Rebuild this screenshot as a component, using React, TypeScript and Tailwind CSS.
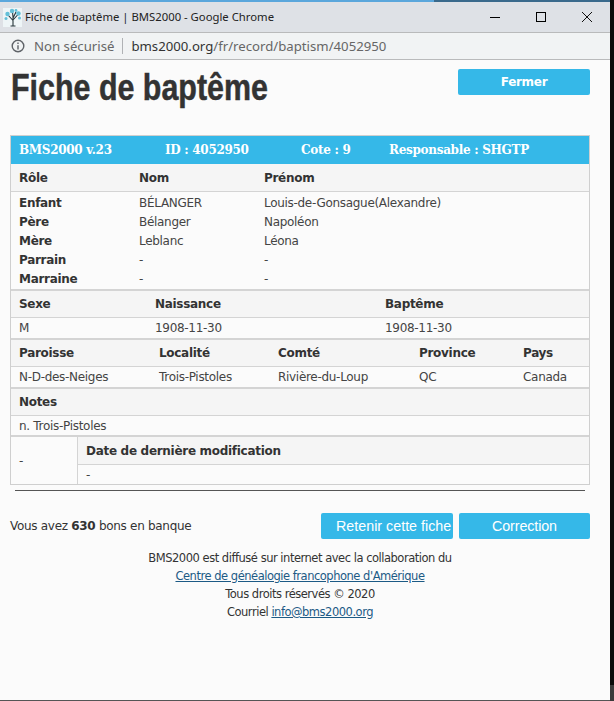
import React from "react";

const cell = "px-[8px]";

function Tree() {
  return (
    <svg width="19" height="19" viewBox="0 0 19 19" className="shrink-0">
      <rect x="0" y="0" width="19" height="19" fill="#eef5f7" />
      <path d="M10 18V9M10 12.5L5 7M10 12L15 6.5M10 9L9.5 4M10 10L13 4" stroke="#26343a" strokeWidth="1.1" fill="none" />
      <path d="M7.5 18h5" stroke="#26343a" strokeWidth="1" />
      <g fill="#63bfd8">
        <circle cx="4.5" cy="6" r="2.2" />
        <circle cx="15.5" cy="5.5" r="2.2" />
        <circle cx="9" cy="3" r="2.2" />
        <circle cx="3" cy="10.5" r="1.5" />
        <circle cx="16.5" cy="10" r="1.5" />
        <circle cx="13" cy="2.5" r="1.4" />
      </g>
    </svg>
  );
}

function Row({ role, nom, prenom }: { role: string; nom: string; prenom: string }) {
  return (
    <div className="flex h-[19px] items-center">
      <div className="w-[128px] pl-[8px] font-bold">{role}</div>
      <div className="w-[125px] text-[#444]">{nom}</div>
      <div className="text-[#444]">{prenom}</div>
    </div>
  );
}

function Cols({ items, head, widths }: { items: string[]; head?: boolean; widths: string[] }) {
  return (
    <div className={head ? "flex h-[26px] items-center bg-[#f5f5f5] font-bold" : "flex h-[20px] items-center text-[#444]"}>
      {items.map((t, i) => (
        <div key={t} className={widths[i]}>
          {t}
        </div>
      ))}
    </div>
  );
}

export default function App() {
  const w1 = ["w-[144px] pl-[8px]", "w-[230px]", "flex-1"];
  const w2 = ["w-[148px] pl-[8px]", "w-[119px]", "w-[141px]", "w-[104px]", "flex-1"];
  return (
    <div className="flex h-[701px] w-[614px] overflow-hidden bg-[#fbfbfb] text-[12px] leading-[18px] tracking-[-0.3px] text-[#333] [font-family:'DejaVu_Sans',sans-serif]">
      <div className="flex min-w-0 flex-1 flex-col">
        <div className="flex h-[2px]">
          <div className="w-[434px] bg-[#5ba7dc]" />
          <div className="flex-1 bg-[#3a6a8c]" />
        </div>
        <div className="flex h-[30px] items-center bg-[#dee1e6] pl-[3px] tracking-normal [font-family:'Noto_Sans',sans-serif]">
          <Tree />
          <span className="ml-[3px] text-[11.3px] text-[#222]">Fiche de baptême | BMS2000 - Google Chrome</span>
          <div className="ml-auto flex items-center pr-[18px]">
            <div className="mt-[1px] h-px w-[10px] bg-black" />
            <div className="ml-[36px] h-[10px] w-[10px] border border-black" />
            <svg width="10" height="10" viewBox="0 0 10 10" className="ml-[36px]">
              <path d="M0 0l10 10M10 0L0 10" stroke="#111" strokeWidth="1" fill="none" />
            </svg>
          </div>
        </div>
        <div className="flex h-[28px] items-center border-y border-[#b9babb] bg-[#f1f3f4] pl-[11px] text-[13.2px] tracking-normal text-[#666] [font-family:'Noto_Sans',sans-serif]">
          <svg width="14" height="14" viewBox="0 0 14 14" fill="none" stroke="#5f6368" strokeWidth="1.4">
            <circle cx="7" cy="7" r="5.8" />
            <path d="M7 6.2V10.4M7 3.5V5" />
          </svg>
          <span className="ml-[9px]">Non sécurisé</span>
          <div className="mr-[8px] ml-[8px] h-[16px] w-px bg-[#b0b2b5]" />
          <span className="text-[#333]">bms2000.org</span>
          <span>/fr/record/baptism/4052950</span>
        </div>
        <div className="flex flex-1 flex-col">
          <div className="flex h-[75px] items-start justify-between pr-[20px] pl-[11px]">
            <h1 className="mt-[6px] origin-left scale-x-[0.822] text-[37px] leading-[44px] font-bold tracking-normal whitespace-nowrap text-[#333] [-webkit-text-stroke:0.5px_#333] [font-family:'Liberation_Sans',sans-serif]">
              Fiche de baptême
            </h1>
            <button className="mt-[9px] h-[26px] w-[132px] rounded-[2px] bg-[#35b8e8] text-[12px] font-bold text-white">
              Fermer
            </button>
          </div>
          <div className="mr-[20px] ml-[10px] border border-[#cfcfcf]">
            <div className="flex h-[28px] items-center bg-[#35b8e8] pl-[8px] font-bold text-white [font-family:'DejaVu_Serif',serif]">
              <span className="w-[146px]">BMS2000 v.23</span>
              <span className="w-[136px]">ID : 4052950</span>
              <span className="w-[88px]">Cote : 9</span>
              <span>Responsable : SHGTP</span>
            </div>
            <div className="flex h-[28px] items-center border-b border-[#d4d4d4] bg-[#f5f5f5] pt-[1px] font-bold">
              <div className="w-[128px] pl-[8px]">Rôle</div>
              <div className="w-[125px]">Nom</div>
              <div>Prénom</div>
            </div>
            <div className="py-[1px]">
              <Row role="Enfant" nom="BÉLANGER" prenom="Louis-de-Gonsague(Alexandre)" />
              <Row role="Père" nom="Bélanger" prenom="Napoléon" />
              <Row role="Mère" nom="Leblanc" prenom="Léona" />
              <Row role="Parrain" nom="-" prenom="-" />
              <Row role="Marraine" nom="-" prenom="-" />
            </div>
            <div className="border-t-2 border-[#d4d4d4]">
              <div className="border-b border-[#d4d4d4]">
                <Cols head items={["Sexe", "Naissance", "Baptême"]} widths={w1} />
              </div>
              <Cols items={["M", "1908-11-30", "1908-11-30"]} widths={w1} />
            </div>
            <div className="border-t-2 border-[#d4d4d4]">
              <div className="border-b border-[#d4d4d4]">
                <Cols head items={["Paroisse", "Localité", "Comté", "Province", "Pays"]} widths={w2} />
              </div>
              <Cols items={["N-D-des-Neiges", "Trois-Pistoles", "Rivière-du-Loup", "QC", "Canada"]} widths={w2} />
            </div>
            <div className="border-t-2 border-[#d4d4d4]">
              <div className={`flex h-[26px] items-center border-b border-[#d4d4d4] bg-[#f5f5f5] box-content font-bold ${cell}`}>Notes</div>
              <div className={`flex h-[19px] items-center text-[#444] ${cell}`}>n. Trois-Pistoles</div>
            </div>
            <div className="flex border-t-2 border-[#d4d4d4]">
              <div className="flex w-[67px] items-center border-r border-[#d4d4d4] pl-[8px] text-[#444]">-</div>
              <div className="flex-1">
                <div className="box-content flex h-[27px] items-center border-b border-[#d4d4d4] bg-[#f5f5f5] pl-[8px] font-bold">
                  Date de dernière modification
                </div>
                <div className="flex h-[19px] items-center pl-[8px] text-[#444]">-</div>
              </div>
            </div>
          </div>
          <div className="mt-[5px] mr-[25px] ml-[15px] h-px bg-[#555]" />
          <div className="mt-[22px] mr-[20px] ml-[10px] flex items-start justify-between">
            <div className="mt-[4px]">
              Vous avez <b>630</b> bons en banque
            </div>
            <div className="flex gap-[6px]">
              <button className="h-[26px] w-[132px] rounded-[2px] bg-[#35b8e8] pl-[15px] text-left text-[14.3px] tracking-normal text-white [font-family:'Liberation_Sans',sans-serif]">
                Retenir cette fiche
              </button>
              <button className="h-[26px] w-[131px] rounded-[2px] bg-[#35b8e8] text-[14.3px] tracking-[-0.1px] text-white [font-family:'Liberation_Sans',sans-serif]">
                Correction
              </button>
            </div>
          </div>
          <div className="mt-[10px] pr-[10px] text-center text-[11.5px] leading-[18px] tracking-[-0.48px]">
            <div>BMS2000 est diffusé sur internet avec la collaboration du</div>
            <div>
              <a className="text-[#1c5a85] underline">Centre de généalogie francophone d'Amérique</a>
            </div>
            <div>Tous droits réservés © 2020</div>
            <div>
              Courriel <a className="text-[#1c5a85] underline">info@bms2000.org</a>
            </div>
          </div>
        </div>
        <div className="h-[1px] bg-[#555]" />
      </div>
      <div className="flex w-[4px] flex-col">
        <div className="flex-1 bg-[#0a0a0a]" />
        <div className="h-[16px] bg-[#3a3a3a]" />
      </div>
    </div>
  );
}
